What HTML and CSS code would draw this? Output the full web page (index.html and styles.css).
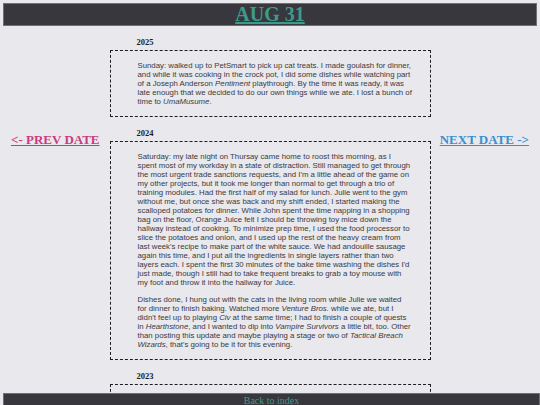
FILE: index.html
```html
<!DOCTYPE html>
<html lang="en">
<head>
<meta charset="utf-8">
<title>Aug 31</title>
<link rel="stylesheet" href="styles.css">
</head>
<body>
<header class="top-bar">
  <h1 class="day-title"><a href="#">AUG 31</a></h1>
</header>

<div class="layout">
  <nav class="side side-prev"><a class="nav-link prev" href="#">&lt;- PREV DATE</a></nav>

  <main class="entries">
    <section class="entry">
      <h4 class="year">2025</h4>
      <div class="entry-box">
        <p>Sunday: walked up to PetSmart to pick up cat treats. I made goulash for dinner, and while it was cooking in the crock pot, I did some dishes while watching part of a Joseph Anderson <i>Pentiment</i> playthrough. By the time it was ready, it was late enough that we decided to do our own things while we ate. I lost a bunch of time to <i>UmaMusume</i>.</p>
      </div>
    </section>

    <section class="entry">
      <h4 class="year">2024</h4>
      <div class="entry-box">
        <p>Saturday: my late night on Thursay came home to roost this morning, as I<br>spent most of my workday in a state of distraction. Still managed to get through the most urgent trade sanctions requests, and I'm a little ahead of the game on my other projects, but it took me longer than normal to get through a trio of training modules. Had the first half of my salad for lunch. Julie went to the gym without me, but once she was back and my shift ended, I started making the scalloped potatoes for dinner. While John spent the time napping in a shopping bag on the floor, Orange Juice felt I should be throwing toy mice down the hallway instead of cooking. To minimize prep time, I used the food processor to slice the potatoes and onion, and I used up the rest of the heavy cream from last week's recipe to make part of the white sauce. We had andouille sausage again this time, and I put all the ingredients in single layers rather than two layers each. I spent the first 30 minutes of the bake time washing the dishes I'd just made, though I still had to take frequent breaks to grab a toy mouse with my foot and throw it into the hallway for Juice.</p>
        <p>Dishes done, I hung out with the cats in the living room while Julie we waited for dinner to finish baking. Watched more <i>Venture Bros.</i> while we ate, but I didn't feel up to playing <i>Civ</i> at the same time; I had to finish a couple of quests in&nbsp;<i>Hearthstone</i>, and I wanted to dip into <i>Vampire Survivors</i> a little bit, too. Other than posting this update and maybe playing a stage or two of <i>Tactical Breach Wizards</i>, that's going to be it for this evening.</p>
      </div>
    </section>

    <section class="entry">
      <h4 class="year">2023</h4>
      <div class="entry-box entry-box-tall"></div>
    </section>
  </main>

  <nav class="side side-next"><a class="nav-link next" href="#">NEXT DATE -&gt;</a></nav>
</div>

<footer class="bottom-bar">
  <a href="#">Back to index</a>
</footer>
</body>
</html>
```

FILE: styles.css
```css
html, body {
  margin: 0;
  padding: 0;
}

body {
  background: #e8e8ed;
  font-family: "Liberation Serif", "Times New Roman", serif;
  color: #222;
}

/* title bar */
.top-bar {
  margin: 3px 3px 0;
  background: #38373d;
  border: 1px solid #707074;
  text-align: center;
}

.day-title {
  margin: 0;
  font-size: 20px;
  line-height: 21px;
  font-weight: bold;
}

.day-title a {
  color: #3d9b8c;
}

/* three columns: prev link, entries, next link */
.layout {
  display: grid;
  grid-template-columns: 1fr 321px 1fr;
  padding-bottom: 40px;
}

.side {
  padding-top: 104px;
}

.side-prev {
  padding-left: 11px;
}

.side-next {
  text-align: right;
  padding-right: 11px;
}

.nav-link {
  font-size: 13px;
  font-weight: bold;
  line-height: 15px;
}

.nav-link.prev {
  color: #cc3b82;
}

.nav-link.next {
  color: #3a8fcf;
}

/* yearly entries */
.entry {
  margin-top: 11px;
}

.year {
  margin: 0 0 3px;
  padding-left: 27px;
  font-size: 8.5px;
  line-height: 10px;
  font-weight: bold;
  color: #1e1e1e;
}

.entry-box {
  border: 1px dashed #1e1e22;
  padding: 2px 17px 2px 27px;
  font-family: "Liberation Sans", Arial, sans-serif;
  font-size: 7.8px;
  line-height: 9px;
  color: #3a3a3e;
}

.entry-box p {
  margin: 8px 0;
}

.entry-box-tall {
  min-height: 80px;
}

/* index link bar */
.bottom-bar {
  position: fixed;
  left: 3px;
  right: 0;
  bottom: -4px;
  background: #38373d;
  border: 1px solid #707074;
  padding: 1px 0;
  text-align: center;
  font-size: 10px;
  line-height: 12px;
}

.bottom-bar a {
  color: #3d9b8c;
}
```
